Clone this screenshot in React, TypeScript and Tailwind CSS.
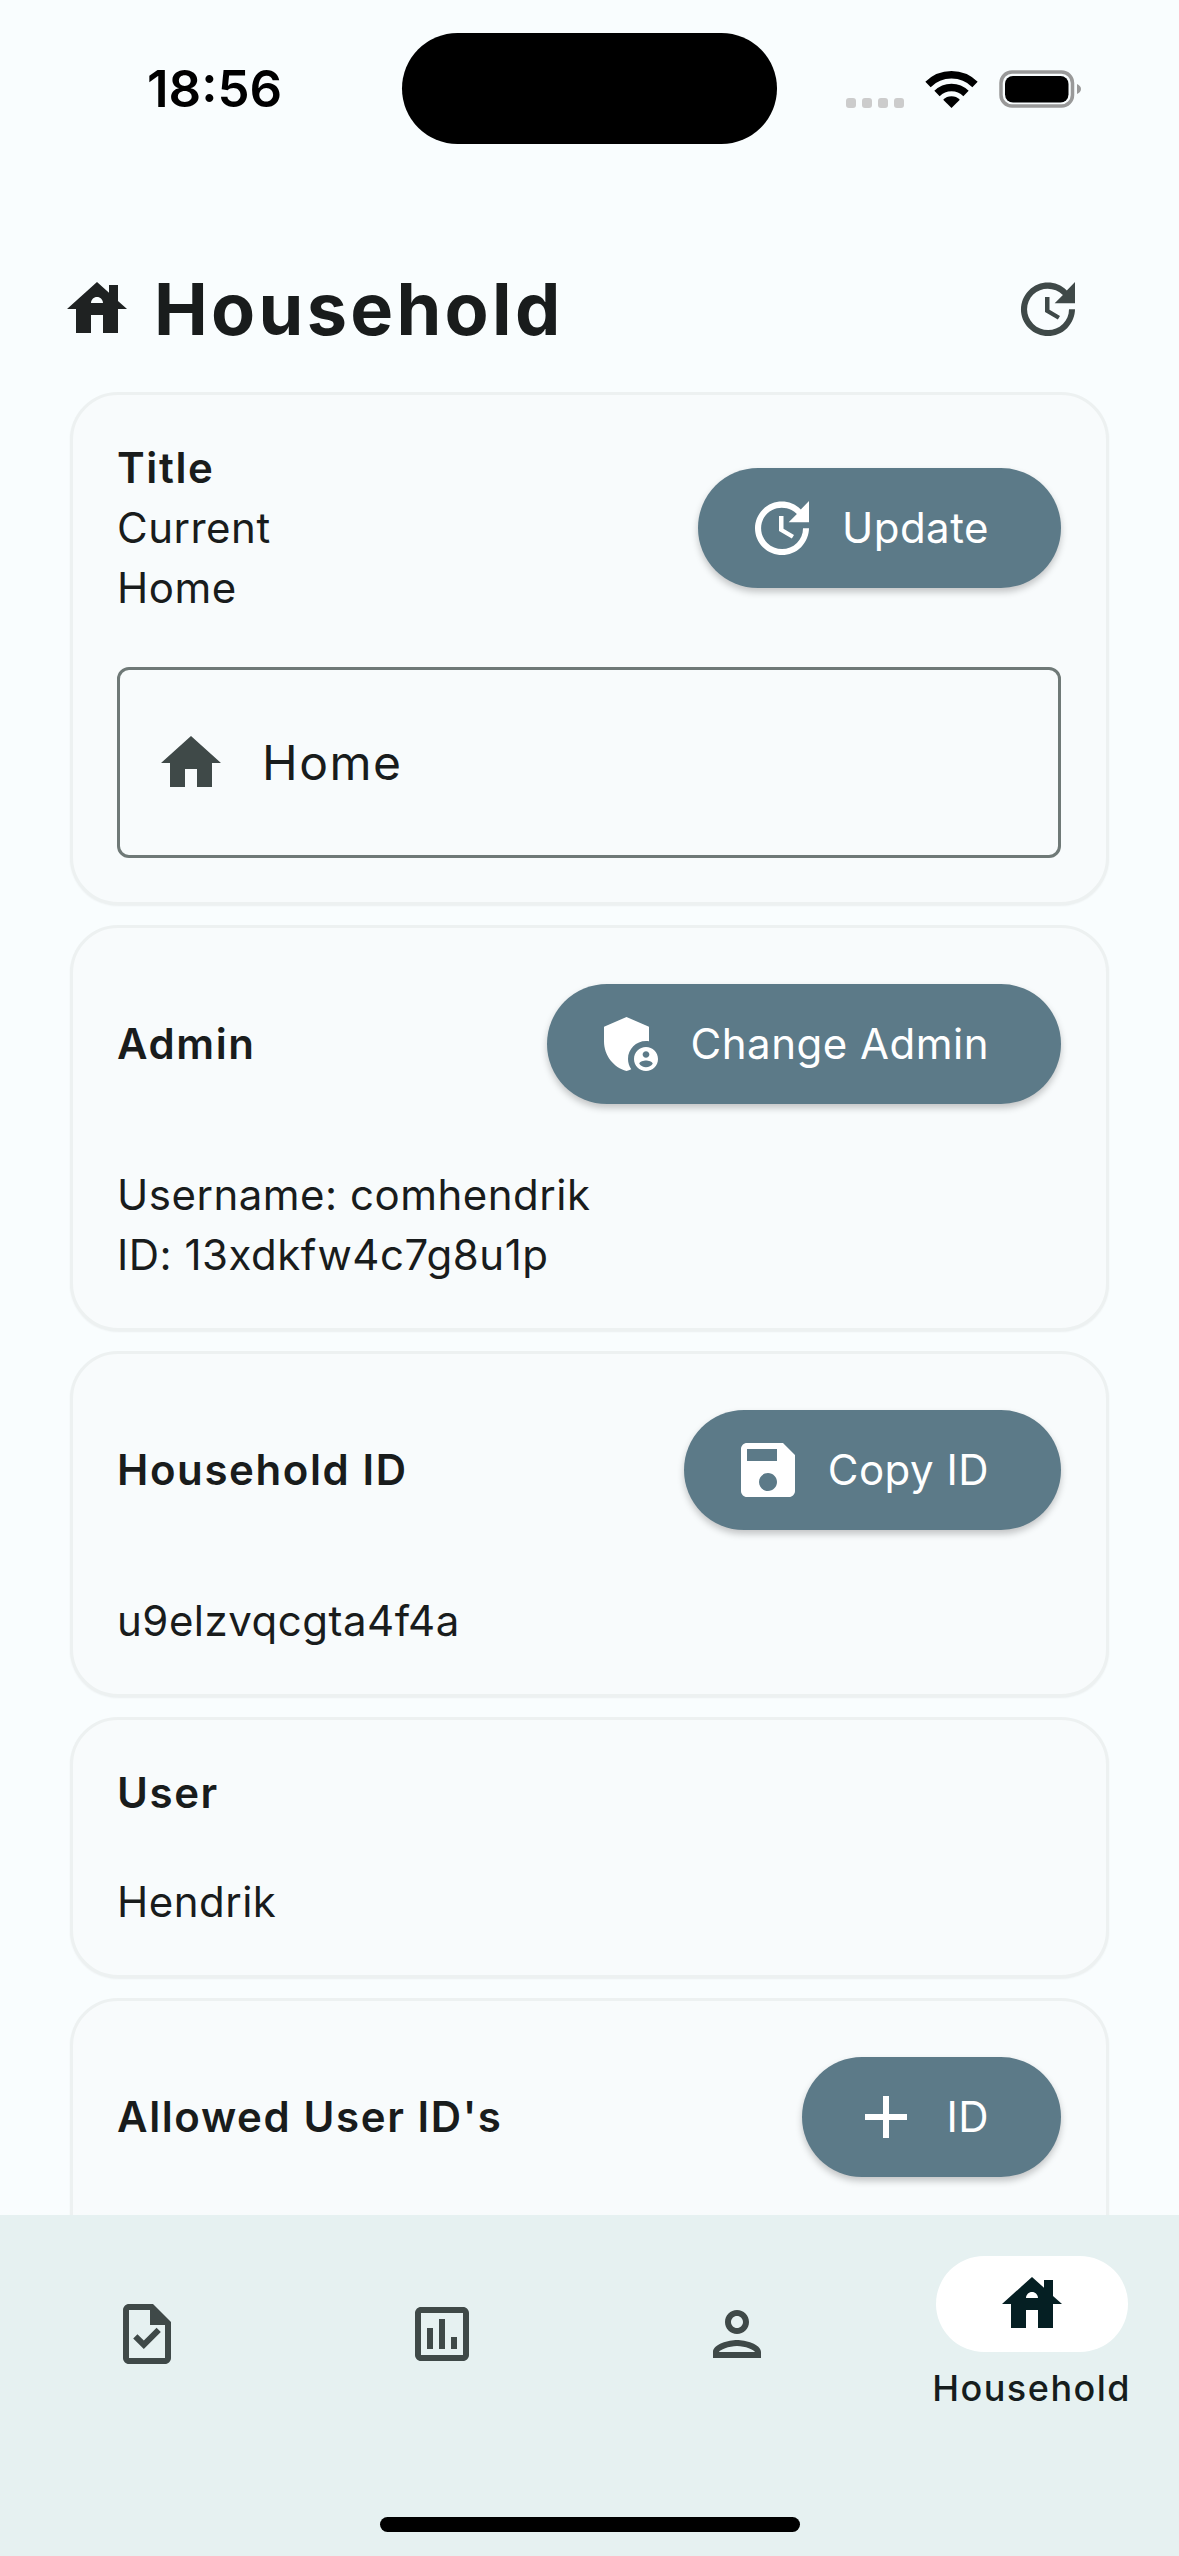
import React from 'react';

const ICONS = {
    house: "M19 9.3V4h-3v2.6L12 3 2 12h3v8h5v-6h4v6h5v-8h3l-3-2.7zm-9 .7c0-1.1.9-2 2-2s2 .9 2 2h-4z",
    home: "M10 20v-6h4v6h5v-8h3L12 3 2 12h3v8z",
    update: "M21 10.12h-6.78l2.74-2.82c-2.73-2.7-7.15-2.8-9.88-.1-2.73 2.71-2.73 7.08 0 9.79s7.15 2.71 9.88 0C18.32 15.65 19 14.08 19 12.1h2c0 1.98-.88 4.55-2.64 6.29-3.51 3.48-9.21 3.48-12.72 0-3.5-3.47-3.53-9.11-.02-12.58s9.14-3.47 12.65 0L21 3v7.12zM12.5 8v4.25l3.5 2.08-.72 1.21L11 13V8h1.5z",
    admin: "M17 11c.34 0 .67.04 1 .09V6.27L10.5 3 3 6.27v4.91c0 4.54 3.2 8.79 7.5 9.82.55-.13 1.08-.32 1.6-.55-.69-.98-1.1-2.17-1.1-3.45 0-3.31 2.69-6 6-6zM17 13c-2.21 0-4 1.79-4 4s1.79 4 4 4 4-1.79 4-4-1.79-4-4-4zm0 1.38c.62 0 1.12.51 1.12 1.12s-.51 1.12-1.12 1.12-1.12-.51-1.12-1.12.5-1.12 1.12-1.12zm0 5.37c-.93 0-1.74-.46-2.24-1.17.05-.72 1.51-1.08 2.24-1.08s2.19.36 2.24 1.08c-.5.71-1.31 1.17-2.24 1.17z",
    save: "M17 3H5c-1.11 0-2 .9-2 2v14c0 1.1.89 2 2 2h14c1.1 0 2-.9 2-2V7l-4-4zm-5 16c-1.66 0-3-1.34-3-3s1.34-3 3-3 3 1.34 3 3-1.34 3-3 3zm3-10H5V5h10v4z",
    add: "M19 13h-6v6h-2v-6H5v-2h6V5h2v6h6v2z",
    task: "M14 2H6c-1.1 0-1.99.9-1.99 2L4 20c0 1.1.89 2 1.99 2H18c1.1 0 2-.9 2-2V8l-6-6zM6 20V4h7v5h5v11H6zm2.82-7.95L7.4 13.46 10.94 17l5.66-5.66-1.41-1.41-4.25 4.24-2.12-2.12z",
    chart: "M19 3H5c-1.1 0-2 .9-2 2v14c0 1.1.9 2 2 2h14c1.1 0 2-.9 2-2V5c0-1.1-.9-2-2-2zm0 16H5V5h14v14zM7 10h2v7H7zm4-3h2v10h-2zm4 6h2v4h-2z",
    person: "M12 6c1.1 0 2 .9 2 2s-.9 2-2 2-2-.9-2-2 .9-2 2-2m0 10c2.7 0 5.8 1.29 6 2H6c.23-.72 3.31-2 6-2m0-12C9.79 4 8 5.79 8 8s1.79 4 4 4 4-1.79 4-4-1.79-4-4-4zm0 10c-2.67 0-8 1.34-8 4v2h16v-2c0-2.66-5.33-4-8-4z",
};

const Icon = ({ d, className }: { d: string; className?: string }) => (
    <svg viewBox="0 0 24 24" fill="currentColor" className={`w-[72px] h-[72px] shrink-0 ${className ?? ''}`}>
        <path d={d} />
    </svg>
);

const StatusIcons = () => (
    <svg viewBox="0 0 236 38" className="w-[236px] h-[38px] ml-[69px]">
        <g fill="#cccccc">
            <rect x="0" y="28" width="10" height="10" rx="3" />
            <rect x="16" y="28" width="10" height="10" rx="3" />
            <rect x="32" y="28" width="10" height="10" rx="3" />
            <rect x="48" y="28" width="10" height="10" rx="3" />
        </g>
        <g fill="none" stroke="#000" strokeWidth="7.5">
            <path d="M82 14.5A33.25 33.25 0 0 1 129 14.5" />
            <path d="M91 23.5A20.5 20.5 0 0 1 120 23.5" />
        </g>
        <path d="M105.5 38L97.2 29.7A11.7 11.7 0 0 1 113.8 29.7Z" fill="#000" />
        <rect x="155" y="2" width="71.5" height="34" rx="11" fill="none" stroke="#999999" strokeWidth="3.5" />
        <rect x="159" y="6" width="63.5" height="26.5" rx="8" fill="#000" />
        <path d="M231 14c2.5 1 4 3 4 5s-1.5 4-4 5z" fill="#999999" />
    </svg>
);

const ActionButton = ({ icon, label }: { icon: string; label: string }) => (
    <button className="flex items-center h-[120px] pl-[48px] pr-[72px] gap-[24px] rounded-full bg-[#5c7a88] text-white text-[42px] font-normal tracking-[0.5px] shadow-[0_4px_7px_rgba(0,0,0,0.22)]">
        <Icon d={icon} />
        <span>{label}</span>
    </button>
);

const Card = ({ children }: { children: React.ReactNode }) => (
    <section className="rounded-[48px] border-[3px] border-[#edf1f1] bg-[#f8fbfc] pl-[44px] pr-[45px] pt-[43px] pb-[43px] shadow-[0_1px_2px_rgba(0,0,0,0.06)]">
        {children}
    </section>
);

const Label = ({ children }: { children: React.ReactNode }) => (
    <div className="font-semibold leading-[60px] tracking-[1.6px]">{children}</div>
);

const NavItem = ({ icon, label, active }: { icon: string; label?: string; active?: boolean }) => (
    <div className={`flex flex-col items-center ${active ? 'pt-[41px]' : 'pt-[83px]'}`}>
        {active ? (
            <div className="flex items-center justify-center w-[192px] h-[96px] rounded-full bg-white text-[#051f23]">
                <Icon d={icon} />
            </div>
        ) : (
            <Icon d={icon} className="text-[#3f4948]" />
        )}
        {label && (
            <span className="mt-[14px] text-[36px] leading-[44px] font-medium tracking-[1.5px] text-[#161d1d]">{label}</span>
        )}
    </div>
);

export default function App() {
    return (
        <div className="flex flex-col w-[1179px] h-[2556px] overflow-hidden bg-[#f9fdfe] text-[#191c1c] text-[42px] leading-[60px] tracking-[0.5px] font-[Inter,sans-serif]">
            <div className="flex-1 min-h-0 overflow-hidden">
                <div className="flex items-center mt-[33px] h-[111px]">
                    <div className="w-[402px] pl-[147px] text-[51px] font-semibold tracking-normal text-black">18:56</div>
                    <div className="w-[375px] h-[111px] rounded-full bg-black" />
                    <StatusIcons />
                </div>

                <header className="flex items-center justify-between h-[72px] mt-[129px] pl-[61px] pr-[95px]">
                    <div className="flex items-center gap-[21px]">
                        <Icon d={ICONS.house} className="text-[#1f2222]" />
                        <h1 className="text-[72px] leading-[72px] font-bold tracking-[3.3px] text-[#191c1c]">Household</h1>
                    </div>
                    <Icon d={ICONS.update} className="text-[#3f4948]" />
                </header>

                <main className="flex flex-col gap-[20px] mt-[47px] mx-[70px]">
                    <Card>
                        <div className="flex items-center justify-between">
                            <div>
                                <Label>Title</Label>
                                <div>Current</div>
                                <div>Home</div>
                            </div>
                            <ActionButton icon={ICONS.update} label="Update" />
                        </div>
                        <div className="flex items-center mt-[49px] h-[191px] rounded-[12px] border-[3px] border-[#6f7977] pl-[35px] gap-[35px] text-[48px] tracking-[1.5px]">
                            <Icon d={ICONS.home} className="text-[#3f4948]" />
                            <span>Home</span>
                        </div>
                        <div className="h-[1px]" />
                    </Card>

                    <Card>
                        <div className="flex items-center justify-between mt-[13px]">
                            <Label>Admin</Label>
                            <ActionButton icon={ICONS.admin} label="Change Admin" />
                        </div>
                        <div className="mt-[61px]">
                            <div>Username: comhendrik</div>
                            <div>ID: 13xdkfw4c7g8u1p</div>
                        </div>
                    </Card>

                    <Card>
                        <div className="flex items-center justify-between mt-[13px]">
                            <Label>Household ID</Label>
                            <ActionButton icon={ICONS.save} label="Copy ID" />
                        </div>
                        <div className="mt-[61px]">u9elzvqcgta4f4a</div>
                    </Card>

                    <Card>
                        <Label>User</Label>
                        <div className="mt-[49px]">Hendrik</div>
                    </Card>

                    <Card>
                        <div className="flex items-center justify-between mt-[13px]">
                            <Label>Allowed User ID's</Label>
                            <ActionButton icon={ICONS.add} label="ID" />
                        </div>
                        <div className="mt-[60px] h-[60px]" />
                    </Card>
                </main>
            </div>

            <nav className="relative flex flex-col h-[341px] shrink-0 bg-[#e6f1f1]">
                <div className="grid grid-cols-4 flex-1">
                    <NavItem icon={ICONS.task} />
                    <NavItem icon={ICONS.chart} />
                    <NavItem icon={ICONS.person} />
                    <NavItem icon={ICONS.house} label="Household" active />
                </div>
                <div className="self-center w-[420px] h-[15px] mb-[24px] rounded-full bg-black" />
            </nav>
        </div>
    );
}
